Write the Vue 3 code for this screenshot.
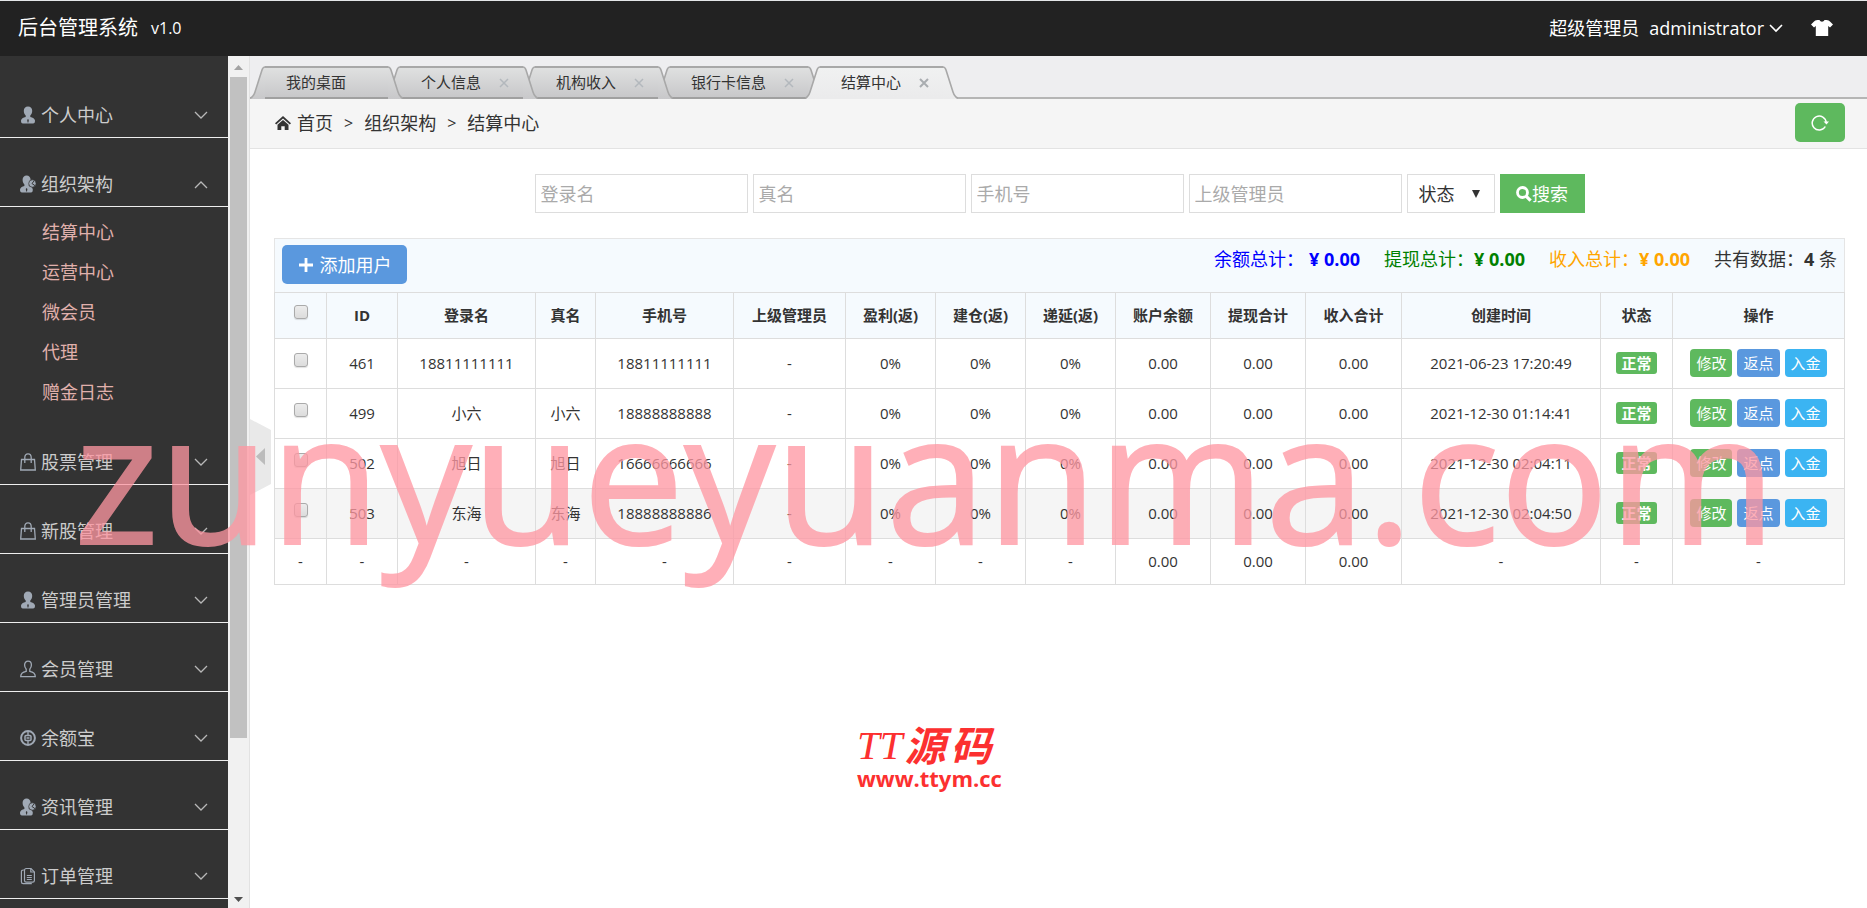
<script setup>
import { ref } from 'vue'

const menus = [
  { label: '个人中心', icon: 'user' },
  {
    label: '组织架构',
    icon: 'group',
    open: true,
    children: ['结算中心', '运营中心', '微会员', '代理', '赠金日志'],
  },
  { label: '股票管理', icon: 'bag' },
  { label: '新股管理', icon: 'bag' },
  { label: '管理员管理', icon: 'user' },
  { label: '会员管理', icon: 'member' },
  { label: '余额宝', icon: 'coin' },
  { label: '资讯管理', icon: 'group' },
  { label: '订单管理', icon: 'order' },
]

const tabs = [
  { label: '我的桌面', closable: false },
  { label: '个人信息', closable: true },
  { label: '机构收入', closable: true },
  { label: '银行卡信息', closable: true },
  { label: '结算中心', closable: true, active: true },
]

const filters = ['登录名', '真名', '手机号', '上级管理员']
const status = ref('')

const totals = [
  { label: '余额总计：', value: '¥ 0.00', kind: 'blue' },
  { label: '提现总计：', value: '¥ 0.00', kind: 'green' },
  { label: '收入总计：', value: '¥ 0.00', kind: 'orange' },
]

const columns = [
  { label: 'ID', width: 'w71' },
  { label: '登录名', width: 'w138' },
  { label: '真名', width: 'w60' },
  { label: '手机号', width: 'w138' },
  { label: '上级管理员', width: 'w112' },
  { label: '盈利(返)', width: 'w90' },
  { label: '建仓(返)', width: 'w90' },
  { label: '递延(返)', width: 'w90' },
  { label: '账户余额', width: 'w95' },
  { label: '提现合计', width: 'w95' },
  { label: '收入合计', width: 'w96' },
  { label: '创建时间', width: 'w199' },
  { label: '状态', width: 'w72' },
  { label: '操作', width: 'w172' },
]

const rows = [
  ['461', '18811111111', '', '18811111111', '2021-06-23 17:20:49'],
  ['499', '小六', '小六', '18888888888', '2021-12-30 01:14:41'],
  ['502', '旭日', '旭日', '16666666666', '2021-12-30 02:04:11'],
  ['503', '东海', '东海', '18888888886', '2021-12-30 02:04:50'],
].map(([id, login, name, phone, time]) => ({
  id,
  cells: [id, login, name, phone, '-', '0%', '0%', '0%', '0.00', '0.00', '0.00', time],
}))

const summary = ['-', '-', '-', '-', '-', '-', '-', '-', '-', '0.00', '0.00', '0.00', '-', '-', '-']
</script>

<template>
  <div class="app">
    <header class="topbar">
      <a href="#" class="brand">后台管理系统</a>
      <span class="version">v1.0</span>
      <div class="account">
        <span>超级管理员</span>
        <button type="button" class="plain account-name">
          administrator
          <svg width="14" height="9" viewBox="0 0 14 9"><path d="M1 1l6 6 6-6" fill="none" stroke="#fff" stroke-width="1.6" /></svg>
        </button>
        <button type="button" class="plain skin" aria-label="换肤">
          <svg width="22" height="16" viewBox="0 0 22 16">
            <path d="M6.500 0h2c.6 1.300 1.400 1.700 2.500 1.700S12.900 1.300 13.500 0h2c1.500 0 3 .9 4 1.900L22 4.500l-3 3-1.800-1.500V16H4.800V6L3 7.500l-3-3 2.500-2.600C3.500.9 5 0 6.500 0z" fill="#fff" />
          </svg>
        </button>
      </div>
    </header>

    <div class="body">
      <aside class="sidebar">
        <nav class="menu">
          <section v-for="m in menus" :key="m.label">
            <button type="button" class="plain menu-head">
              <svg class="menu-icon" width="16" height="18" viewBox="0 0 16 18">
                <template v-if="m.icon === 'user'">
                  <path d="M8 0.500c2.600 0 4.200 1.900 4.200 4.300 0 1.900-.7 3.700-1.900 4.700v1.400c2.400.7 4.700 1.700 4.700 3.700 0 1.900-.4 2.900-2 2.900H3c-1.600 0-2-1-2-2.900 0-2 2.300-3 4.700-3.700V9.500C4.500 8.500 3.800 6.700 3.800 4.800 3.800 2.400 5.400.5 8 .5z" fill="#a0a9b5" />
                  <path d="M8 13l.8 1-.4 2.500h-.8L7.200 14z" fill="#333" />
                </template>
                <template v-else-if="m.icon === 'group'">
                  <path d="M6.600 0.500c2.400 0 4 1.900 4 4.200 0 1.900-.7 3.600-1.800 4.700v1.500c2.300.7 4 1.700 4 3.700 0 1.900-.4 2.900-1.800 2.900H2c-1.500 0-2-1-2-2.900 0-2 2.200-3 4.400-3.700V9.400C3.300 8.300 2.600 6.600 2.600 4.700 2.600 2.400 4.200.5 6.600.5z" fill="#a0a9b5" />
                  <path d="M6.600 13l.8 1-.4 2.500h-.8L5.800 14z" fill="#333" />
                  <circle cx="12.400" cy="8.500" r="3.700" fill="#a0a9b5" stroke="#333" stroke-width=".7" />
                  <path d="M12 8.500l3 2.200M12 8.500l2-2.500" stroke="#333" stroke-width="1" />
                </template>
                <g v-else-if="m.icon === 'bag'" fill="none" stroke="#a0a9b5" stroke-width="1.300">
                  <path d="M1.500 6.500h13L15.300 17H.7z" />
                  <path d="M4.800 10V4.500C4.800 2.300 6 .8 8 .8s3.200 1.500 3.200 3.700V10" />
                </g>
                <path v-else-if="m.icon === 'member'" d="M8 1.200c2 0 3.400 1.500 3.400 3.700 0 1.900-.7 3.200-1.600 4.200v2.300c2.700.5 5.500 1.400 5.500 5.300H.7c0-3.900 2.800-4.800 5.500-5.300V9.100C5.300 8.100 4.600 6.800 4.600 4.900c0-2.200 1.400-3.700 3.400-3.700z" fill="none" stroke="#a0a9b5" stroke-width="1.300" />
                <g v-else-if="m.icon === 'coin'" fill="none" stroke="#a0a9b5">
                  <circle cx="8" cy="9" r="6.900" stroke-width="2" />
                  <rect x="5" y="6.500" width="6" height="5" rx="1" stroke-width="1.500" />
                  <path d="M8 2v4.500M8 11.500V16M6.500 9h3" stroke-width="1.400" />
                </g>
                <g v-else fill="none" stroke="#a0a9b5" stroke-width="1.200">
                  <path d="M4.500 3.500c0-1.200.6-2 1.800-2H11l3.400 3.400v8.600c0 1-.6 1.700-1.700 1.700H6.200c-1.100 0-1.700-.7-1.700-1.700z" />
                  <path d="M4.500 3H3.200C2 3 1.400 3.700 1.400 4.800v9.900c0 1.200.6 1.900 1.800 1.900h8.600M10.800 1.500V5h3.400M6.800 8.500h5M6.800 10.500h5M6.800 12.500h5" />
                </g>
              </svg>
              <span>{{ m.label }}</span>
              <svg class="menu-arrow" :class="{ up: m.open }" width="14" height="9" viewBox="0 0 14 9"><path d="M1 1l6 6 6-6" fill="none" stroke="#b8b8b8" stroke-width="1.300" /></svg>
            </button>
            <ul v-if="m.children" class="submenu">
              <li v-for="c in m.children" :key="c"><a href="#">{{ c }}</a></li>
            </ul>
          </section>
        </nav>
        <div class="scrollbar" aria-hidden="true">
          <svg width="19" height="21" viewBox="0 0 19 21"><path d="M6 14l4.500-5 4.500 5z" fill="#a3a3a3" /></svg>
          <div class="thumb"></div>
          <div class="track"></div>
          <svg width="19" height="21" viewBox="0 0 19 21"><path d="M6 10l4.500 5 4.500-5z" fill="#505050" /></svg>
        </div>
      </aside>

      <main class="content">
        <div class="tabs">
          <div
            v-for="(t, i) in tabs"
            :key="t.label"
            class="tab"
            :class="{ active: t.active }"
            :style="{ zIndex: t.active ? 10 : 9 - i }"
          >
            <svg class="edge" width="15" height="33" viewBox="0 0 15 33">
              <defs>
                <linearGradient id="tabFill" x1="0" y1="0" x2="0" y2="1"><stop offset="0" stop-color="#dfe0e0" /><stop offset="1" stop-color="#c8c8ca" /></linearGradient>
                <linearGradient id="tabFillActive" x1="0" y1="0" x2="0" y2="1"><stop offset="0" stop-color="#f0f1f1" /><stop offset="1" stop-color="#ebebec" /></linearGradient>
              </defs>
              <path d="M1 33C3 31 4 29 5 26L12 4Q13 1 15 1V33z" :fill="t.active ? 'url(#tabFillActive)' : 'url(#tabFill)'" />
              <path d="M0 32C3 31 4 29 5 26L12 4Q13 1 15 1" fill="none" stroke="#a8a8a8" stroke-width="1.600" />
            </svg>
            <a href="#" class="tab-label">{{ t.label }}</a>
            <svg class="edge" width="15" height="33" viewBox="0 0 15 33">
              <path d="M14 33C12 31 11 29 10 26L3 4Q2 1 0 1V33z" :fill="t.active ? 'url(#tabFillActive)' : 'url(#tabFill)'" />
              <path d="M15 32C12 31 11 29 10 26L3 4Q2 1 0 1" fill="none" stroke="#a8a8a8" stroke-width="1.600" />
            </svg>
            <button v-if="t.closable" type="button" class="plain tab-close" aria-label="关闭">
              <svg width="10" height="10" viewBox="0 0 10 10"><path d="M1 1l8 8M9 1l-8 8" :stroke="t.active ? '#a9adb0' : '#b3b8bd'" :stroke-width="t.active ? 2 : 1.500" /></svg>
            </button>
          </div>
        </div>

        <div class="crumbs">
          <svg width="16" height="14" viewBox="0 0 16 14">
            <path d="M8 0l8 7.200-1.200 1.300L8 2.500 1.200 8.500 0 7.200z" fill="#333" />
            <path d="M8 4l5.500 4.700V14H9.700v-3.800H6.300V14H2.500V8.700z" fill="#333" />
          </svg>
          <a href="#">首页</a>
          <span class="sep">&gt;</span>
          <span>组织架构</span>
          <span class="sep">&gt;</span>
          <span>结算中心</span>
          <button type="button" class="refresh" aria-label="刷新">
            <svg width="18" height="16" viewBox="0 0 18 16">
              <path d="M14.300 11.500A7 7 0 1 1 15.200 7.500" fill="none" stroke="#fff" stroke-width="1.500" />
              <path d="M12.500 6.500h5.500L15.500 9.500z" fill="#fff" />
            </svg>
          </button>
        </div>

        <div class="page">
          <form class="search" @submit.prevent>
            <input v-for="f in filters" :key="f" type="text" class="field" :placeholder="f" :aria-label="f" />
            <div class="select">
              <select v-model="status" aria-label="状态">
                <option value="">状态</option>
              </select>
              <svg width="8" height="8" viewBox="0 0 8 8"><path d="M0 0h8L4 8z" fill="#333" /></svg>
            </div>
            <button type="submit" class="search-btn">
              <svg width="16" height="16" viewBox="0 0 16 16"><circle cx="6.500" cy="6.500" r="5" fill="none" stroke="#fff" stroke-width="2.800" /><path d="M10.300 10.300l4.300 4.300" stroke="#fff" stroke-width="3.200" /></svg>
              <span>搜索</span>
            </button>
          </form>

          <div class="toolbar">
            <button type="button" class="add">
              <svg width="16" height="16" viewBox="0 0 16 16"><path d="M8 1v14M1 8h14" stroke="#fff" stroke-width="2.800" /></svg>
              <span>添加用户</span>
            </button>
            <div class="totals">
              <span v-for="t in totals" :key="t.kind" :class="t.kind">{{ t.label }}<strong>{{ t.value }}</strong></span>
              <span>共有数据：<strong>4</strong> 条</span>
            </div>
          </div>

          <table class="grid">
            <colgroup>
              <col class="w52" />
              <col v-for="c in columns" :key="c.label" :class="c.width" />
            </colgroup>
            <thead>
              <tr>
                <th><input type="checkbox" class="check" aria-label="全选" /></th>
                <th v-for="c in columns" :key="c.label">{{ c.label }}</th>
              </tr>
            </thead>
            <tbody>
              <tr v-for="r in rows" :key="r.id" class="row" :class="{ hover: r.id === '503' }">
                <td><input type="checkbox" class="check" :aria-label="'选择 ' + r.id" /></td>
                <td v-for="(c, i) in r.cells" :key="i">{{ c }}</td>
                <td><span class="badge">正常</span></td>
                <td>
                  <div class="actions">
                    <button type="button" class="edit">修改</button>
                    <button type="button" class="rebate">返点</button>
                    <button type="button" class="deposit">入金</button>
                  </div>
                </td>
              </tr>
              <tr>
                <td v-for="(c, i) in summary" :key="i">{{ c }}</td>
              </tr>
            </tbody>
          </table>
        </div>

        <button type="button" class="plain collapse" aria-label="收起菜单">
          <svg width="21" height="76" viewBox="0 0 21 76"><path d="M0 0l21 11v54L0 76z" fill="#e9e9e9" /><path d="M15 29v17L6 37.500z" fill="#bcbcbc" /></svg>
        </button>

        <div class="stamp">
          <div class="stamp-name"><i>TT</i><b>源</b><b>码</b></div>
          <div class="stamp-url">www.ttym.cc</div>
        </div>
      </main>
    </div>

    <div class="watermark">zunyueyuanma.com</div>
  </div>
</template>

<style>
body {
  margin: 0;
  overflow: hidden;
}
</style>

<style scoped>
.app {
  position: relative;
  display: flex;
  flex-direction: column;
  height: 100vh;
  overflow: hidden;
  box-sizing: border-box;
  border-top: 1px solid #e4e6e8;
  background: #fff;
  color: #333;
  font-family: "Open Sans", "Noto Sans", "Noto Sans CJK SC", sans-serif;
  font-size: 18px;
  line-height: 24px;
}
.app *,
.app *::before {
  box-sizing: border-box;
}
a {
  color: inherit;
  text-decoration: none;
}
button,
input,
select {
  margin: 0;
  font-family: inherit;
  font-size: inherit;
  line-height: inherit;
  color: inherit;
}
svg {
  display: block;
  flex: none;
}
.plain {
  padding: 0;
  border: 0;
  background: none;
}

.topbar {
  display: flex;
  align-items: center;
  flex: none;
  height: 55px;
  padding: 0 34px 1px 18px;
  background: #222;
  color: #fff;
}
.brand {
  font-size: 20px;
}
.version {
  margin-left: 13px;
  font-size: 16px;
}
.account {
  display: flex;
  align-items: center;
  gap: 10px;
  margin-left: auto;
}
.account-name {
  display: flex;
  align-items: center;
  gap: 5px;
}
.skin {
  margin-left: 18px;
}

.body {
  display: flex;
  flex: 1;
  min-height: 0;
}
.sidebar {
  display: flex;
  flex: none;
  width: 250px;
  background: #f1f1f1;
  border-right: 1px solid #e2e2e2;
}
.menu {
  width: 228px;
  padding-top: 13px;
  overflow: hidden;
  background: #333;
  color: #ccc;
}
.menu-head {
  display: flex;
  align-items: center;
  width: 100%;
  height: 69px;
  padding: 24px 20px 0 20px;
  border-bottom: 1px solid #eee;
}
.menu-icon {
  margin-right: 5px;
}
.menu-arrow {
  margin-left: auto;
}
.menu-arrow.up {
  transform: rotate(180deg);
}
.submenu {
  margin: 0;
  padding: 5px 0 4px 42px;
  list-style: none;
  color: #e0b0ac;
  line-height: 40px;
}
.scrollbar {
  display: flex;
  flex-direction: column;
  width: 19px;
}
.thumb {
  flex: 661;
  margin-left: 2px;
  background: #c1c1c1;
}
.track {
  flex: 149;
}

.content {
  position: relative;
  flex: 1;
  min-width: 0;
}
.tabs {
  display: flex;
  align-items: flex-end;
  height: 43px;
  background: linear-gradient(#b5b5b5, #b5b5b5) bottom / 100% 2px no-repeat #eeeef0;
  font-size: 15px;
}
.tab {
  position: relative;
  display: flex;
  height: 33px;
  margin-right: -18px;
}
.tab-label {
  min-width: 123px;
  height: 33px;
  padding: 0 42px 0 21px;
  border-top: 2px solid #a8a8a8;
  border-bottom: 2px solid #a0a0a0;
  background: linear-gradient(#dfe0e0, #c8c8ca);
  line-height: 28px;
}
.tab.active .tab-label {
  border-bottom-color: #ebebec;
  background: linear-gradient(#f0f1f1, #ebebec);
}
.tab-close {
  position: absolute;
  top: 12px;
  right: 29px;
}

.crumbs {
  display: flex;
  align-items: center;
  height: 50px;
  padding: 0 22px 2px 25px;
  border-bottom: 1px solid #e3e3e3;
  background: #f5f5f5;
}
.crumbs a {
  margin-left: 6px;
}
.sep {
  margin: 0 11px;
  font-size: 16px;
}
.refresh {
  display: flex;
  align-items: center;
  justify-content: center;
  width: 50px;
  height: 39px;
  margin-left: auto;
  border: 0;
  border-radius: 5px;
  background: #5eb95e;
}

.page {
  padding: 25px 22px 0 24px;
}
.search {
  display: flex;
  justify-content: center;
  gap: 5px;
  margin-bottom: 25px;
}
.field {
  width: 213px;
  height: 39px;
  padding: 0 5px;
  border: 1px solid #ddd;
  border-radius: 0;
  background: #fff;
  outline: 0;
}
.field::placeholder {
  color: #aaa;
  opacity: 1;
}
.select {
  position: relative;
  width: 88px;
}
.select select {
  width: 100%;
  height: 39px;
  padding: 0 11px;
  border: 1px solid #ddd;
  border-radius: 0;
  background: #fff;
  appearance: none;
}
.select svg {
  position: absolute;
  top: 16px;
  right: 15px;
  pointer-events: none;
}
.search-btn {
  display: flex;
  align-items: center;
  justify-content: center;
  width: 85px;
  height: 39px;
  padding: 0;
  border: 0;
  background: #5eb95e;
  color: #fff;
}

.toolbar {
  display: flex;
  align-items: flex-start;
  justify-content: space-between;
  height: 54px;
  padding: 6px 7px;
  border: 1px solid #e5e5e5;
  border-bottom: 0;
  background: #f5fafe;
}
.add {
  display: flex;
  align-items: center;
  justify-content: center;
  gap: 6px;
  width: 125px;
  height: 39px;
  padding: 0;
  border: 0;
  border-radius: 5px;
  background: #5a98de;
  color: #fff;
}
.totals {
  display: flex;
  gap: 24px;
  line-height: 28px;
}
.blue {
  color: #00f;
}
.blue strong {
  margin-left: 5px;
}
.green {
  color: green;
}
.orange {
  color: orange;
}

.grid {
  width: 100%;
  border-collapse: collapse;
  table-layout: fixed;
  font-size: 15px;
  text-align: center;
}
.grid th,
.grid td {
  height: 46px;
  padding: 0 0 1px;
  border: 1px solid #ddd;
  white-space: nowrap;
}
.grid th {
  background: #f5fafe;
  font-weight: 700;
}
.grid .row td {
  height: 50px;
}
.grid .hover td {
  background: #f5f5f5;
}
.w52 { width: 52px; }
.w60 { width: 60px; }
.w71 { width: 71px; }
.w72 { width: 72px; }
.w90 { width: 90px; }
.w95 { width: 95px; }
.w96 { width: 96px; }
.w112 { width: 112px; }
.w138 { width: 138px; }
.w172 { width: 172px; }
.w199 { width: 199px; }
.check {
  width: 14px;
  height: 14px;
  margin-bottom: 2px;
  border: 1px solid #aaa;
  border-radius: 3px;
  background: linear-gradient(#ececec, #dcdcdc);
  box-shadow: 0 1px 1px rgba(0, 0, 0, 0.12);
  appearance: none;
}
.badge {
  display: inline-block;
  padding: 0 5px;
  border-radius: 3px;
  background: #5eb95e;
  color: #fff;
  font-weight: 700;
  line-height: 22px;
}
.actions {
  display: flex;
  justify-content: center;
  gap: 5px;
}
.actions button {
  height: 28px;
  padding: 0 6px;
  border: 0;
  border-radius: 4px;
  color: #fff;
}
.edit {
  background: #5eb95e;
}
.rebate {
  background: #5a98de;
}
.deposit {
  background: #3bb4f2;
}

.collapse {
  position: absolute;
  top: 363px;
  left: 0;
}
.stamp {
  position: absolute;
  top: 669px;
  left: 607px;
  color: #fc3030;
}
.stamp-name {
  display: flex;
  align-items: center;
  height: 40px;
  font-size: 41px;
  line-height: 40px;
}
.stamp-name i {
  margin-right: 2px;
  font-family: "Liberation Serif", serif;
}
.stamp-name b {
  margin-right: 5px;
  font-style: italic;
}
.stamp-url {
  font-size: 22px;
  font-weight: 700;
  line-height: 26px;
}
.watermark {
  position: absolute;
  top: 351px;
  left: 74px;
  z-index: 20;
  color: #ff97a2;
  font-size: 181px;
  line-height: 245px;
  white-space: nowrap;
  opacity: 0.76;
  pointer-events: none;
  -webkit-text-stroke: 2px #ff97a2;
}
</style>
